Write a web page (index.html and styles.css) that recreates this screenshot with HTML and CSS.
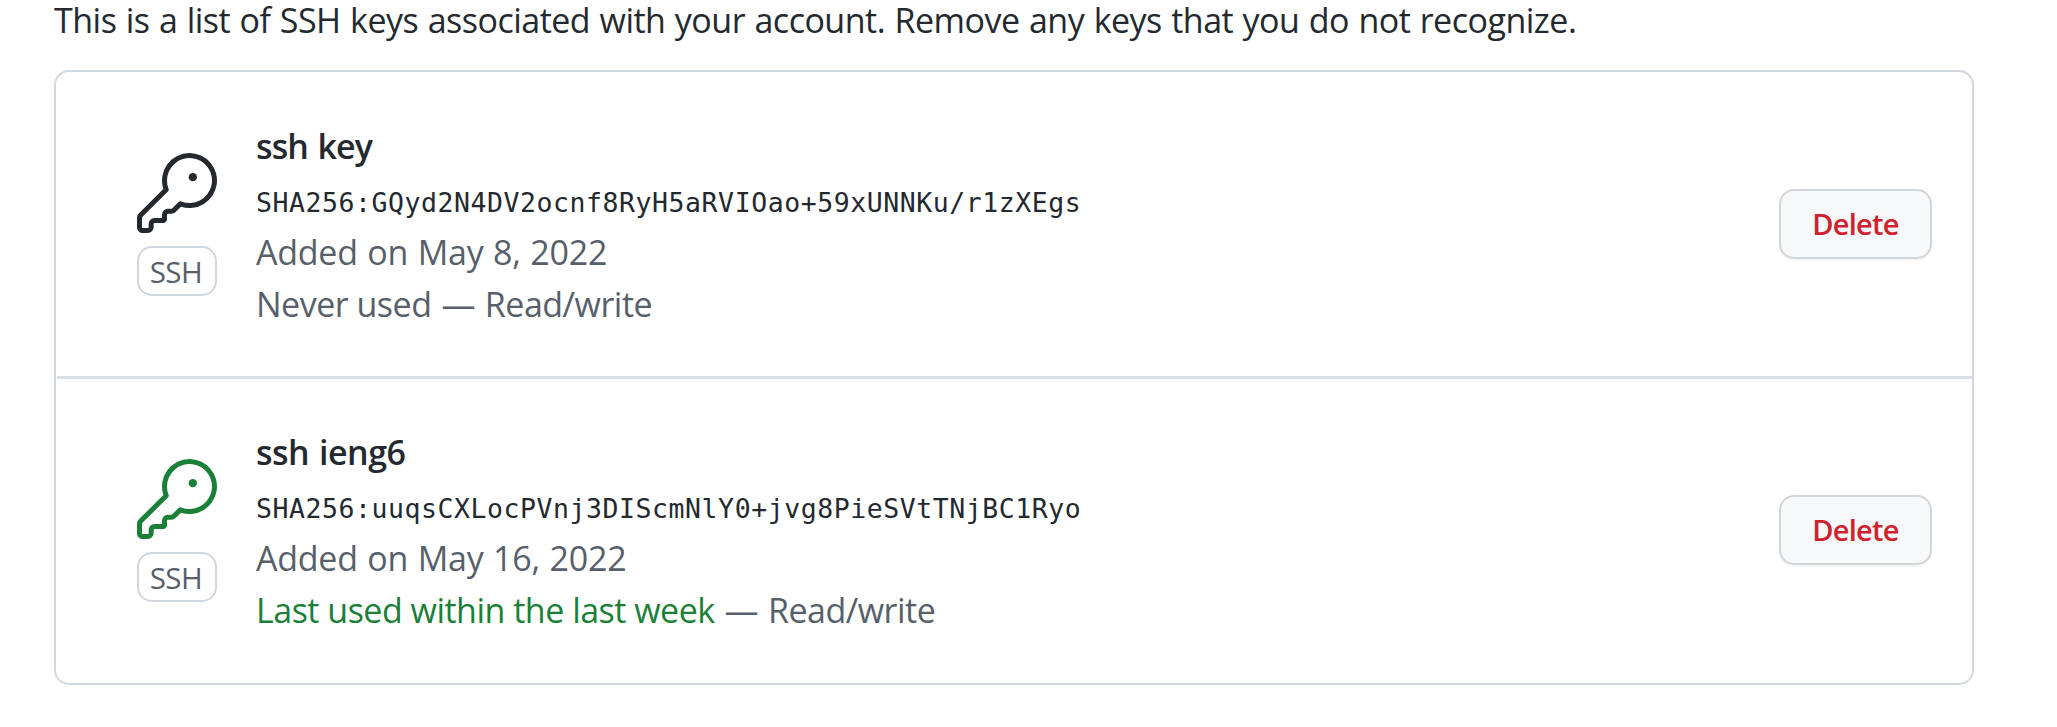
FILE: index.html
```
<!DOCTYPE html>
<html lang="en">
<head>
<meta charset="utf-8">
<title>SSH keys</title>
<link rel="stylesheet" href="styles.css">
</head>
<body>
<svg class="sprite" aria-hidden="true">
  <symbol id="key" viewBox="0 0 24 24">
    <path d="M16.75 8.5a1.25 1.25 0 100-2.5 1.25 1.25 0 000 2.5z"/>
    <path fill-rule="evenodd" d="M15.75 0a8.25 8.25 0 00-7.851 10.79L.513 18.178A1.75 1.75 0 000 19.414v2.836C0 23.217.784 24 1.75 24h1.5A1.75 1.75 0 005 22.25v-1a.25.25 0 01.25-.25h2.735a.75.75 0 00.545-.22l.214-.213A.875.875 0 009 19.948V18.5a.25.25 0 01.25-.25h1.086c.464 0 .91-.184 1.237-.513l1.636-1.636A8.25 8.25 0 1015.75 0zM9 8.25a6.75 6.75 0 114.288 6.287.75.75 0 00-.804.168l-1.971 1.972a.25.25 0 01-.177.073H9.25A1.75 1.75 0 007.5 18.5v1H5.25a1.75 1.75 0 00-1.75 1.75v1a.25.25 0 01-.25.25h-1.5a.25.25 0 01-.25-.25v-2.836a.25.25 0 01.073-.177l7.722-7.721a.75.75 0 00.168-.804A6.73 6.73 0 019 8.25z"/>
  </symbol>
</svg>
<main class="page">
  <p class="intro">This is a list of SSH keys associated with your account. Remove any keys that you do not recognize.</p>
  <ul class="keys">
    <li class="key">
      <div class="badge">
        <svg class="icon"><use href="#key"/></svg>
        <span class="label">SSH</span>
      </div>
      <div class="details">
        <strong class="name">ssh key</strong>
        <code class="hash">SHA256:GQyd2N4DV2ocnf8RyH5aRVIOao+59xUNNKu/r1zXEgs</code>
        <span class="meta added">Added on May 8, 2022</span>
        <span class="meta">Never used<span class="access"> — Read/write</span></span>
      </div>
      <button class="delete" type="button">Delete</button>
    </li>
    <li class="key">
      <div class="badge">
        <svg class="icon recent"><use href="#key"/></svg>
        <span class="label">SSH</span>
      </div>
      <div class="details">
        <strong class="name">ssh ieng6</strong>
        <code class="hash">SHA256:uuqsCXLocPVnj3DIScmNlY0+jvg8PieSVtTNjBC1Ryo</code>
        <span class="meta added">Added on May 16, 2022</span>
        <span class="meta"><span class="recent">Last used within the last week</span><span class="access"> — Read/write</span></span>
      </div>
      <button class="delete" type="button">Delete</button>
    </li>
  </ul>
</main>
</body>
</html>
```
FILE: styles.css
```
* { box-sizing: border-box; }
body {
  margin: 0;
  background: #fff;
  color: #24292f;
  font-family: "Open Sans", "Noto Sans", sans-serif;
  font-size: 34px;
  line-height: 52px;
  overflow: hidden;
}
.sprite { display: none; }
.page { width: 1920px; margin-left: 54px; }
.intro {
  margin: -6px 0 24px;
  white-space: nowrap;
  letter-spacing: -0.5px;
  word-spacing: 1.05px;
}
.keys {
  list-style: none;
  margin: 0;
  padding: 0;
  height: 615px;
  border: 2px solid #d0d7de;
  border-radius: 15px;
}
.key {
  display: flex;
  height: 304px;
  padding: 48px 40px 0 81px;
}
.key + .key {
  height: 307px;
  margin-left: 1px;
  padding-top: 47px;
  padding-left: 80px;
  border-top: 3px solid #d8dee4;
}
.badge {
  display: flex;
  flex-direction: column;
  width: 80px;
  margin: 33px 39px 0 0;
}
.icon { width: 80px; height: 80px; fill: currentColor; }
.label {
  margin-top: 13px;
  height: 50px;
  border: 2px solid #d0d7de;
  border-radius: 15px;
  color: #57606a;
  font-size: 29.5px;
  line-height: 47px;
  text-align: center;
  letter-spacing: -0.5px;
  padding-right: 2px;
}
.details {
  display: flex;
  flex: 1;
  flex-direction: column;
  white-space: nowrap;
}
.name {
  font-weight: 600;
  letter-spacing: -0.9px;
  word-spacing: 1.5px;
}
.key + .key .name { letter-spacing: -0.5px; }
.hash {
  margin-top: 7px;
  font-family: "DejaVu Sans Mono", monospace;
  font-size: 26.5px;
  line-height: 47px;
  letter-spacing: 0.55px;
}
.meta { color: #57606a; letter-spacing: -0.5px; }
.added { letter-spacing: -0.25px; word-spacing: 1px; }
.access { word-spacing: 1.6px; }
.recent { color: #1a7f37; }
.delete {
  width: 153px;
  height: 70px;
  margin-top: 69px;
  padding: 0;
  border: 2px solid #d3d6d9;
  border-radius: 15px;
  background: #f6f8fa;
  box-shadow: 0 2px 0 rgba(27, 31, 36, 0.04);
  color: #cf222e;
  font: 600 29px/66px "Open Sans", "Noto Sans", sans-serif;
  letter-spacing: -0.7px;
}
```
